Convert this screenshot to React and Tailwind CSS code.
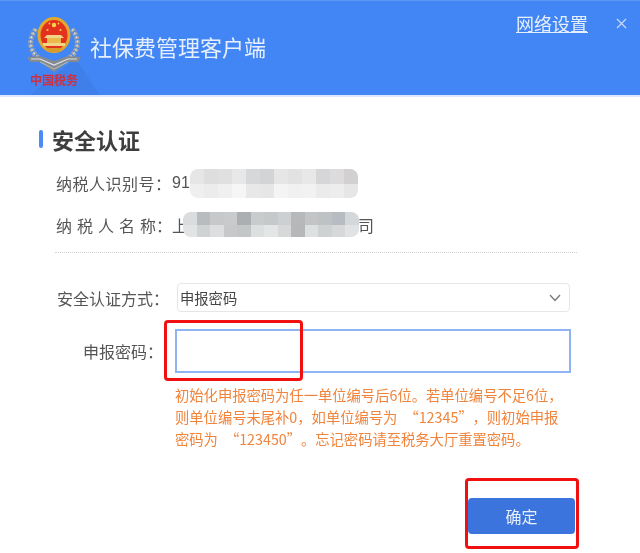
const row1 = [
  ["#e6e6e6","#dedede","#e0e0e0","#e8e8e8","#d6d8da","#d2d4d6","#e6e6e6","#e2e2e2","#e8e8e8","#d6d6d8","#dcdcdc","#d2d0d0"],
  ["#efefef","#ececec","#f0f0f0","#f6f6f6","#e8e8e8","#e6e6e6","#f4f4f4","#f1f1f1","#f2f2f2","#ebebeb","#ededed","#e6e6e6"],
];
const row2 = [
  ["#dadcdd","#b9bcbe","#c6c8ca","#c8cacb","#acafb1","#c9cccd","#c6c8ca","#cdd0d2","#b6b8ba","#c2c4c6","#bfc2c4","#b6bcc2","#d5d8da"],
  ["#e2e3e4","#d0d3d4","#dcdedf","#c6c8c9","#c3c5c6","#dcdfe0","#e4e6e6","#d6d8d9","#b5b7b9","#dde0e1","#cfd2d3","#d6d8da","#e0e2e3"],
];

function Patch({ rows, className }) {
  return (
    <div className={"absolute overflow-hidden rounded-lg flex flex-col blur-[0.5px] " + className}>
      {rows.map((r, i) => (
        <div key={i} className="flex flex-1">
          {r.map((c, j) => (
            <div key={j} className="flex-1" style={{ backgroundColor: c }} />
          ))}
        </div>
      ))}
    </div>
  );
}

function Emblem() {
  return (
    <svg width="56" height="58" viewBox="0 0 56 58" className="block">
      <g fill="none" stroke="#9ea3a6" strokeWidth="5" strokeDasharray="3 1.2">
        <path d="M10 14 C2 24 3 36 13 43" />
        <path d="M46 14 C54 24 53 36 43 43" />
      </g>
      <g fill="none" stroke="#e3e6e8" strokeWidth="1.2" strokeDasharray="2 2.2">
        <path d="M10 14 C2 24 3 36 13 43" />
        <path d="M46 14 C54 24 53 36 43 43" />
      </g>
      <path d="M1 42 L14 41 L28 46 L42 41 L55 42 L52 47 L42 47 L28 57 L14 47 L4 47 Z" fill="#858b90" />
      <path d="M5 44 L14 44 L28 50 L42 44 L51 44" fill="none" stroke="#dfe3e6" strokeWidth="1.2" />
      <path d="M14 47 L28 54 L42 47" fill="none" stroke="#c4c9cc" strokeWidth="0.8" />
      <ellipse cx="28" cy="20" rx="16.5" ry="18" fill="#e3a92f" />
      <ellipse cx="28" cy="20" rx="13.5" ry="15" fill="#e2311d" />
      <g fill="#f6d24a">
        <circle cx="28" cy="10" r="2.2" />
        <circle cx="21.5" cy="15" r="1.1" />
        <circle cx="34.5" cy="15" r="1.1" />
        <circle cx="23.5" cy="8.5" r="0.9" />
        <circle cx="32.5" cy="8.5" r="0.9" />
      </g>
      <path d="M18 23 L38 23 L35 20 L21 20 Z" fill="#f2d487" />
      <rect x="21" y="23" width="14" height="5" fill="#e9b94c" />
      <rect x="17" y="28" width="22" height="3" fill="#f2d487" />
      <path d="M19 33 L37 33 L33 37 L23 37 Z" fill="#d99a28" />
    </svg>
  );
}

export default function App() {
  return (
    <div className="relative w-[640px] h-[553px] overflow-hidden bg-white text-[#555] blur-[0.5px]" style={{ fontFamily: '"Noto Sans CJK SC", "Liberation Sans", sans-serif' }}>
      <header className="relative flex h-[97px] items-start justify-between border-t border-[#5c96f6] border-b-2 border-b-[#dbe7fb] bg-[#4285f4] pl-[26px] pr-[13px]">
        <svg className="absolute left-0 top-0 h-full w-[100px]" viewBox="0 0 100 95">
          <path d="M30 95 L76 58 L100 95 Z" fill="#3f7fea" />
        </svg>
        <div className="relative flex">
          <div className="mt-[14px] flex flex-col items-center">
            <Emblem />
            <span className="-mt-[1px] text-[12px] leading-[15px] font-bold text-[#cf3040]">中国税务</span>
          </div>
          <h1 className="ml-[8px] mt-[30px] text-[22px] leading-[30px] font-normal text-[#e6effd]">社保费管理客户端</h1>
        </div>
        <div className="relative mt-[10px] flex items-start gap-[28px]">
          <a className="text-[18px] leading-[24px] text-[#e6effd] underline underline-offset-1">网络设置</a>
          <svg width="11" height="11" viewBox="0 0 11 11" className="mt-[7px]" fill="none" stroke="#c9dafa" strokeWidth="1.2">
            <path d="M1 1 L10 10 M10 1 L1 10" />
          </svg>
        </div>
      </header>

      <main className="pl-[39px] pr-[63px]">
        <div className="mt-[27px] flex items-center">
          <span className="h-[18px] w-[3.5px] rounded-full bg-[#4b8bf5]" />
          <h2 className="ml-[9.5px] text-[22px] leading-[30px] font-bold text-[#3e3e3e]">安全认证</h2>
        </div>

        <div className="relative ml-[17px] mt-[16px] flex h-[26px] items-center text-[16px]">
          <span className="w-[116px] tracking-[0.5px] whitespace-nowrap">纳税人识别号：</span>
          <span style={{ fontFamily: '"Liberation Sans", sans-serif' }}>91</span>
          <Patch rows={row1} className="left-[134px] top-[-1px] h-[29px] w-[168px]" />
        </div>
        <div className="relative ml-[17px] mt-[16px] flex h-[26px] items-center text-[16px]">
          <span className="flex w-[116px] justify-between whitespace-nowrap">
            <span>纳</span><span>税</span><span>人</span><span>名</span><span>称：</span>
          </span>
          <span>上</span>
          <span className="ml-[170px]">司</span>
          <Patch rows={row2} className="left-[127px] top-[0px] h-[25px] w-[176px]" />
        </div>

        <div className="ml-[16px] mt-[14px] border-t border-dotted border-[#cfcfcf]" />

        <div className="mt-[30px] flex items-center">
          <label className="ml-[18px] w-[112px] text-[16px] whitespace-nowrap">安全认证方式：</label>
          <div className="ml-[8px] flex h-[29px] w-[393px] items-center justify-between rounded border border-[#e6e6ea] pl-[2px] pr-[8px] text-[14.3px] text-[#444]">
            <span>申报密码</span>
            <svg width="12" height="8" viewBox="0 0 12 8" fill="none" stroke="#777" strokeWidth="1.3"><path d="M1 1 L6 6.5 L11 1" /></svg>
          </div>
        </div>

        <div className="mt-[17px] flex items-center">
          <label className="ml-[44px] w-[80px] text-[16px] whitespace-nowrap">申报密码：</label>
          <input className="ml-[12px] h-[44px] w-[396px] border-2 border-[#8fb4f3] outline-none" />
        </div>

        <p className="ml-[136px] mt-[11px] w-[410px] text-[14.3px] leading-[22px] text-[#f0843c] whitespace-nowrap">
          初始化申报密码为任一单位编号后6位。若单位编号不足6位，<br />
          则单位编号未尾补0，如单位编号为<span className="pl-[7px]">“</span>12345<span className="pr-[7px]">”</span>，则初始申报<br />
          密码为<span className="pl-[7px]">“</span>123450<span className="pr-[7px]">”</span>。忘记密码请至税务大厅重置密码。
        </p>

        <div className="mt-[48px] flex justify-end">
          <button className="mr-[2px] h-[36px] w-[107px] rounded bg-[#3b74dc] text-[16px] text-[#e8effc]">确定</button>
        </div>
      </main>

      <div className="absolute left-[164px] top-[320px] h-[61px] w-[139px] rounded border-[3px] border-[#f01010]" />
      <div className="absolute left-[465px] top-[478px] h-[71px] w-[114px] rounded border-[3px] border-[#f01010]" />
    </div>
  );
}
